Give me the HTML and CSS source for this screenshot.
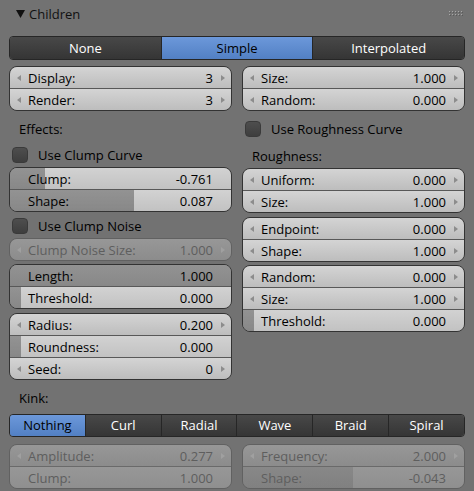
FILE: index.html
```html
<!DOCTYPE html>
<html lang="en">
<head>
    <meta charset="UTF-8">
    <title>Children</title>
    <link rel="stylesheet" href="styles.css">
</head>
<body>

<div class="panel">
    <!-- Panel header -->
    <div class="panel-header">
        <span class="panel-title">
            <svg class="disclosure" width="9" height="8" viewBox="0 0 9 8"><polygon points="0,0 9,0 4.5,8"/></svg>
            Children
        </span>
        <svg class="grip" width="14" height="5" viewBox="0 0 14 5">
            <g fill="#a8a8a8">
                <rect x="0" y="0" width="1" height="1"/><rect x="3" y="0" width="1" height="1"/><rect x="6" y="0" width="1" height="1"/><rect x="9" y="0" width="1" height="1"/><rect x="12" y="0" width="1" height="1"/>
                <rect x="0" y="3" width="1" height="1"/><rect x="3" y="3" width="1" height="1"/><rect x="6" y="3" width="1" height="1"/><rect x="9" y="3" width="1" height="1"/><rect x="12" y="3" width="1" height="1"/>
            </g>
            <g fill="#5a5a5a">
                <rect x="1" y="1" width="1" height="1"/><rect x="4" y="1" width="1" height="1"/><rect x="7" y="1" width="1" height="1"/><rect x="10" y="1" width="1" height="1"/><rect x="13" y="1" width="1" height="1"/>
                <rect x="1" y="4" width="1" height="1"/><rect x="4" y="4" width="1" height="1"/><rect x="7" y="4" width="1" height="1"/><rect x="10" y="4" width="1" height="1"/><rect x="13" y="4" width="1" height="1"/>
            </g>
        </svg>
    </div>

    <!-- Children type -->
    <div class="enum enum-type">
        <div class="enum-item">None</div>
        <div class="enum-item active">Simple</div>
        <div class="enum-item">Interpolated</div>
    </div>

    <div class="columns">
        <!-- Left column -->
        <div class="column">
            <div class="field-group">
                <div class="field"><span class="arrow left"></span><span class="field-label">Display:</span><span class="field-value">3</span><span class="arrow right"></span></div>
                <div class="field"><span class="arrow left"></span><span class="field-label">Render:</span><span class="field-value">3</span><span class="arrow right"></span></div>
            </div>

            <div class="section-label mt6">Effects:</div>
            <div class="check-row mt3"><span class="checkbox"></span>Use Clump Curve</div>

            <div class="field-group mt1">
                <div class="field slider" style="--fill: 16%"><span class="arrow"></span><span class="field-label">Clump:</span><span class="field-value">-0.761</span><span class="arrow"></span></div>
                <div class="field slider" style="--fill: 56%"><span class="arrow"></span><span class="field-label">Shape:</span><span class="field-value">0.087</span><span class="arrow"></span></div>
            </div>

            <div class="check-row mt3"><span class="checkbox"></span>Use Clump Noise</div>
            <div class="field-group disabled mt1">
                <div class="field"><span class="arrow left"></span><span class="field-label">Clump Noise Size:</span><span class="field-value">1.000</span><span class="arrow right"></span></div>
            </div>

            <div class="field-group mt3">
                <div class="field slider" style="--fill: 100%"><span class="arrow"></span><span class="field-label">Length:</span><span class="field-value">1.000</span><span class="arrow"></span></div>
                <div class="field slider" style="--fill: 5%"><span class="arrow"></span><span class="field-label">Threshold:</span><span class="field-value">0.000</span><span class="arrow"></span></div>
            </div>

            <div class="field-group mt4">
                <div class="field"><span class="arrow left"></span><span class="field-label">Radius:</span><span class="field-value">0.200</span><span class="arrow right"></span></div>
                <div class="field slider" style="--fill: 5%"><span class="arrow"></span><span class="field-label">Roundness:</span><span class="field-value">0.000</span><span class="arrow"></span></div>
                <div class="field"><span class="arrow left"></span><span class="field-label">Seed:</span><span class="field-value">0</span><span class="arrow right"></span></div>
            </div>
        </div>

        <!-- Right column -->
        <div class="column">
            <div class="field-group">
                <div class="field"><span class="arrow left"></span><span class="field-label">Size:</span><span class="field-value">1.000</span><span class="arrow right"></span></div>
                <div class="field"><span class="arrow left"></span><span class="field-label">Random:</span><span class="field-value">0.000</span><span class="arrow right"></span></div>
            </div>

            <div class="check-row mt7"><span class="checkbox"></span>Use Roughness Curve</div>
            <div class="section-label short mt5">Roughness:</div>

            <div class="field-group mt1">
                <div class="field"><span class="arrow left"></span><span class="field-label">Uniform:</span><span class="field-value">0.000</span><span class="arrow right"></span></div>
                <div class="field"><span class="arrow left"></span><span class="field-label">Size:</span><span class="field-value">1.000</span><span class="arrow right"></span></div>
            </div>

            <div class="field-group mt4">
                <div class="field"><span class="arrow left"></span><span class="field-label">Endpoint:</span><span class="field-value">0.000</span><span class="arrow right"></span></div>
                <div class="field"><span class="arrow left"></span><span class="field-label">Shape:</span><span class="field-value">1.000</span><span class="arrow right"></span></div>
            </div>

            <div class="field-group mt3">
                <div class="field"><span class="arrow left"></span><span class="field-label">Random:</span><span class="field-value">0.000</span><span class="arrow right"></span></div>
                <div class="field"><span class="arrow left"></span><span class="field-label">Size:</span><span class="field-value">1.000</span><span class="arrow right"></span></div>
                <div class="field slider" style="--fill: 5%"><span class="arrow"></span><span class="field-label">Threshold:</span><span class="field-value">0.000</span><span class="arrow"></span></div>
            </div>
        </div>
    </div>

    <!-- Kink -->
    <div class="section-label short mt7">Kink:</div>
    <div class="enum enum-kink mt5">
        <div class="enum-item active">Nothing</div>
        <div class="enum-item">Curl</div>
        <div class="enum-item">Radial</div>
        <div class="enum-item">Wave</div>
        <div class="enum-item">Braid</div>
        <div class="enum-item">Spiral</div>
    </div>

    <div class="columns mt7">
        <div class="column">
            <div class="field-group disabled">
                <div class="field"><span class="arrow left"></span><span class="field-label">Amplitude:</span><span class="field-value">0.277</span><span class="arrow right"></span></div>
                <div class="field slider" style="--fill: 0%"><span class="arrow"></span><span class="field-label">Clump:</span><span class="field-value">1.000</span><span class="arrow"></span></div>
            </div>
        </div>
        <div class="column">
            <div class="field-group disabled">
                <div class="field"><span class="arrow left"></span><span class="field-label">Frequency:</span><span class="field-value">2.000</span><span class="arrow right"></span></div>
                <div class="field slider" style="--fill: 50%"><span class="arrow"></span><span class="field-label">Shape:</span><span class="field-value">-0.043</span><span class="arrow"></span></div>
            </div>
        </div>
    </div>
</div>

</body>
</html>
```

FILE: styles.css
```css
body {
    margin: 0;
    background-color: #727272;
    font-family: "Open Sans", "Noto Sans", sans-serif;
    font-size: 13px;
    color: #000;
}
.panel {
    padding: 0 9px;
}
.panel-header {
    height: 28px;
    display: flex;
    align-items: center;
    justify-content: space-between;
    padding: 0 2px 0 7px;
}
.panel-title {
    display: flex;
    align-items: center;
    gap: 4px;
    color: #111;
}
.disclosure {
    fill: #111;
}
.grip {
    margin-top: -1px;
}

/* Enum (radio) rows */
.enum {
    display: flex;
    border: 1px solid #262626;
    border-radius: 4px;
    overflow: hidden;
}
.enum-type {
    margin-top: 8px;
    height: 22px;
}
.enum-kink {
    height: 21px;
}
.enum-item {
    flex: 1;
    text-align: center;
    line-height: 22px;
    color: #fff;
    background: linear-gradient(#484848, #353535);
}
.enum-kink .enum-item {
    line-height: 21px;
}
.enum-item + .enum-item {
    border-left: 1px solid #262626;
}
.enum-item.active {
    color: #000;
    background: linear-gradient(#6c98da, #5280c4);
}

/* Two-column layout */
.columns {
    display: flex;
    gap: 10px;
    margin-top: 6px;
}
.column {
    flex: 1;
    display: flex;
    flex-direction: column;
}
.columns.mt7 {
    margin-top: 7px;
}

.section-label {
    height: 24px;
    line-height: 24px;
    padding-left: 10px;
}
.section-label.short {
    height: 22px;
    line-height: 22px;
}
.check-row {
    height: 22px;
    display: flex;
    align-items: center;
    padding-left: 3px;
}
.checkbox {
    width: 14px;
    height: 14px;
    margin-right: 10px;
    border: 1px solid #3a3a3a;
    border-radius: 4px;
    background: linear-gradient(#4e4e4e, #3e3e3e);
}

/* Number fields */
.field-group {
    border: 1px solid #333;
    border-radius: 8px;
    overflow: hidden;
}
.field {
    height: 21px;
    display: flex;
    align-items: center;
    padding: 0 6px 0 7px;
    background: linear-gradient(#d4d4d4, #bdbdbd);
}
.field + .field {
    border-top: 1px solid #585858;
}
.field.slider {
    background:
        linear-gradient(to right, rgba(0, 0, 0, 0.3) var(--fill), transparent var(--fill)),
        linear-gradient(#d2d2d2, #c2c2c2);
}
.field-label {
    flex: 1;
    margin-left: 7px;
    white-space: nowrap;
}
.field-value {
    margin-right: 8px;
}
.arrow {
    width: 4px;
    height: 6px;
}
.arrow.left {
    width: 0;
    height: 0;
    border-top: 3px solid transparent;
    border-bottom: 3px solid transparent;
    border-right: 4px solid #8c8c8c;
}
.arrow.right {
    width: 0;
    height: 0;
    border-top: 3px solid transparent;
    border-bottom: 3px solid transparent;
    border-left: 4px solid #8c8c8c;
}

/* Inactive fields */
.field-group.disabled {
    border-color: #616161;
}
.disabled .field {
    color: #5e5e5e;
    background: linear-gradient(#979797, #8c8c8c);
}
.disabled .field.slider {
    background:
        linear-gradient(to right, rgba(0, 0, 0, 0.1) var(--fill), transparent var(--fill)),
        linear-gradient(#979797, #8f8f8f);
}
.disabled .field + .field {
    border-top-color: #6a6a6a;
}
.disabled .arrow.left {
    border-right-color: #a0a0a0;
}
.disabled .arrow.right {
    border-left-color: #a0a0a0;
}

.mt1 { margin-top: 1px; }
.mt3 { margin-top: 3px; }
.mt4 { margin-top: 4px; }
.mt5 { margin-top: 5px; }
.mt6 { margin-top: 6px; }
.mt7 { margin-top: 7px; }
```
